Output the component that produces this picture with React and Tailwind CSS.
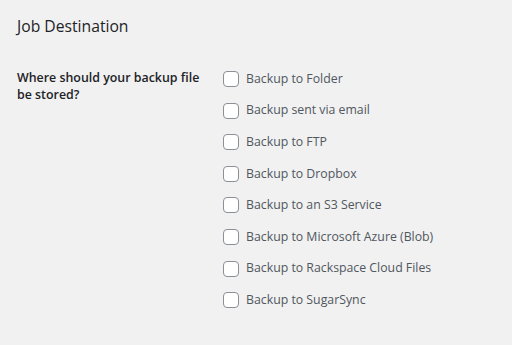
import React from 'react';

const destinations = [
    'Backup to Folder',
    'Backup sent via email',
    'Backup to FTP',
    'Backup to Dropbox',
    'Backup to an S3 Service',
    'Backup to Microsoft Azure (Blob)',
    'Backup to Rackspace Cloud Files',
    'Backup to SugarSync',
];

const App = () => {
    return (
        <div className="w-[512px] h-[345px] bg-[#f1f1f1] font-['Open_Sans',sans-serif] text-[#1d2327] overflow-hidden">
            <div className="px-[17px] pt-[15px]">
                <h2 className="text-[15.7px] leading-[22px] font-normal">Job Destination</h2>

                {/* Destination options */}
                <div className="flex mt-[34px]">
                    <div className="w-[190px] mr-[16px] text-[12.4px] leading-[17px] font-semibold -mt-[2px]">
                        Where should your backup file be stored?
                    </div>
                    <div className="flex flex-col gap-[15.6px]">
                        {destinations.map((label) => (
                            <label key={label} className="flex items-center gap-[7px] h-[16px]">
                                <span className="w-[16px] h-[16px] rounded-[4px] border border-[#8c8f94] bg-white shrink-0"></span>
                                <span className="text-[12.3px] text-[#50575e]">{label}</span>
                            </label>
                        ))}
                    </div>
                </div>
            </div>
        </div>
    );
};

export default App;
